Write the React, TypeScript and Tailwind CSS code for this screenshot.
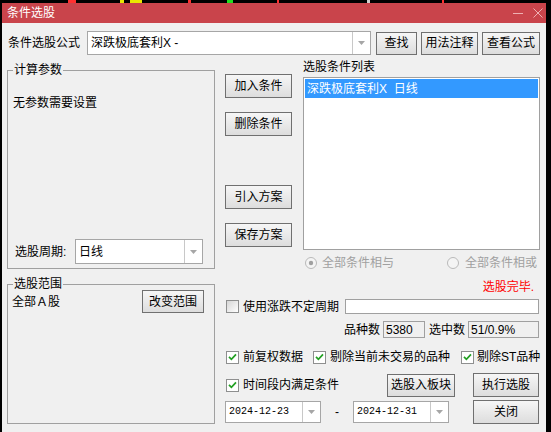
import React from 'react';

type Props = { children?: React.ReactNode; className?: string };

// Classic dialog push button
const Btn = ({ children, className = '' }: Props) => (
  <div
    className={`flex items-center justify-center border border-[#707070] bg-gradient-to-b from-[#f6f6f6] to-[#dddddd] ${className}`}
  >
    {children}
  </div>
);

// Drop-down combo box with the little grey arrow
const Combo = ({ text, className = '', mono = false }: { text: string; className?: string; mono?: boolean }) => (
  <div className={`flex border border-[#a6a6a6] bg-white ${className}`}>
    <div
      className={`flex flex-1 items-center pl-[3px] ${
        mono ? "font-['Liberation_Mono',monospace] text-[10px]" : ''
      }`}
    >
      {text}
    </div>
    <div className="flex w-[18px] items-center justify-center border-l border-[#c8c8c8]">
      <svg width="7" height="4" viewBox="0 0 7 4">
        <path d="M0 0H7L3.5 4Z" fill="#a6a6a6" />
      </svg>
    </div>
  </div>
);

const Check = ({ checked = false }: { checked?: boolean }) => (
  <div
    className={`flex h-[13px] w-[13px] shrink-0 items-center justify-center border border-[#8e8f8f] ${
      checked ? 'bg-white' : 'bg-gradient-to-br from-[#d6d6d6] to-[#ffffff]'
    }`}
  >
    {checked && (
      <svg width="9" height="8" viewBox="0 0 9 8">
        <path d="M1 3.8L3.4 6.3L8 1.3" stroke="#22a022" strokeWidth="1.7" fill="none" />
      </svg>
    )}
  </div>
);

const Radio = ({ on = false }: { on?: boolean }) => (
  <svg width="12" height="12" viewBox="0 0 12 12" className="shrink-0">
    <circle cx="6" cy="6" r="5.5" fill="#f4f4f4" stroke="#b9b9b9" />
    {on && <circle cx="6" cy="6" r="2.2" fill="#a0a0a0" />}
  </svg>
);

// Titled frame; the caption sits on top of the frame line
const Group = ({ title, className = '', children }: Props & { title: string }) => (
  <div className={`relative border border-[#a0a0a0] ${className}`}>
    <span className="absolute -top-[8px] left-[5px] bg-[#f0f0f0] px-[1px]">{title}</span>
    {children}
  </div>
);

export default function App() {
  return (
    <div className="flex h-[432px] w-[551px] flex-col overflow-hidden bg-black font-['Liberation_Sans','Noto_Sans_CJK_SC',sans-serif] text-[12px] leading-[14px] text-black">
      {/* chart pixels peeking above the dialog */}
      <div className="flex h-[3px]">
        <span className="ml-[68px] w-[8px] bg-[#ff3030]" />
        <span className="ml-[44px] w-[4px] bg-[#e8e800]" />
        <span className="ml-[6px] w-[12px] bg-[#e8e800]" />
        <span className="ml-[46px] w-[3px] bg-[#ff3030]" />
        <span className="ml-[36px] w-[6px] bg-[#20e020]" />
        <span className="ml-[44px] w-[2px] bg-[#ff3030]" />
        <span className="ml-[88px] w-[3px] bg-[#d0d0d0]" />
        <span className="ml-[72px] w-[2px] bg-[#ff3030]" />
      </div>

      <div className="flex flex-1">
        <div className="w-[2px]" />
        <div className="flex w-[544px] flex-col">
          {/* title bar */}
          <div className="flex h-[20px] items-center bg-[#c9444b] pl-[5px] text-white">
            <span className="flex-1">条件选股</span>
            <svg width="10" height="10" viewBox="0 0 10 10" className="mr-[10px]">
              <path d="M0 5.5H10" stroke="#eeb0b2" strokeWidth="1" />
            </svg>
            <svg width="10" height="10" viewBox="0 0 10 10" className="mr-[3px]">
              <path d="M0.5 0.5L9.5 9.5M9.5 0.5L0.5 9.5" stroke="#eeb0b2" strokeWidth="1" />
            </svg>
          </div>

          <div className="flex-1 bg-[#f0f0f0]">
            {/* formula selector */}
            <div className="mt-[8px] flex h-[24px] items-center">
              <span className="ml-[6px] w-[79px]">条件选股公式</span>
              <Combo className="h-[24px] w-[284px]" text="深跌极底套利X -" />
              <Btn className="ml-[5px] h-[23px] w-[41px]">查找</Btn>
              <Btn className="ml-[4px] h-[23px] w-[57px]">用法注释</Btn>
              <Btn className="ml-[4px] h-[23px] w-[58px]">查看公式</Btn>
            </div>

            <div className="mt-[5px] flex">
              {/* left column */}
              <div className="ml-[5px] flex w-[208px] flex-col">
                <Group title="计算参数" className="mt-[10px] flex h-[199px] flex-col">
                  <span className="ml-[5px] mt-[25px]">无参数需要设置</span>
                  <div className="mb-[4px] mt-auto flex items-center">
                    <span className="ml-[7px] w-[60px]">选股周期:</span>
                    <Combo className="h-[25px] w-[128px]" text="日线" />
                  </div>
                </Group>
                <Group title="选股范围" className="mt-[15px] flex h-[140px] items-start pt-[5px]">
                  <span className="ml-[4px] mt-[5px]">全部Ａ股</span>
                  <Btn className="ml-auto mr-[10px] h-[23px] w-[62px]">改变范围</Btn>
                </Group>
              </div>

              {/* right side */}
              <div className="ml-[10px] flex w-[316px] flex-col">
                <div className="flex h-[190px]">
                  <div className="flex w-[67px] flex-col">
                    <Btn className="mt-[14px] h-[24px]">加入条件</Btn>
                    <Btn className="mt-[14px] h-[24px]">删除条件</Btn>
                    <Btn className="mt-[49px] h-[24px]">引入方案</Btn>
                    <Btn className="mt-[14px] h-[24px]">保存方案</Btn>
                  </div>
                  <div className="ml-[11px] flex w-[237px] flex-col">
                    <span className="h-[14px]">选股条件列表</span>
                    <div className="mt-[3px] h-[173px] border border-[#a0a0a0] bg-white p-[1px]">
                      <div className="flex h-[19px] items-center bg-[#3399ff] pl-[2px] text-white">
                        深跌极底套利X&nbsp;&nbsp;日线
                      </div>
                    </div>
                  </div>
                </div>

                <div className="mt-[6px] flex h-[14px] items-center text-[#a0a0a0]">
                  <span className="ml-[80px]" />
                  <Radio on />
                  <span className="ml-[5px]">全部条件相与</span>
                  <span className="ml-[53px]" />
                  <Radio />
                  <span className="ml-[6px]">全部条件相或</span>
                </div>

                <div className="mt-[10px] flex h-[14px] justify-end pr-[7px] text-[#ff0000]">选股完毕.</div>

                <div className="mt-[5px] flex h-[15px] items-center">
                  <span className="ml-[1px]" />
                  <Check />
                  <span className="ml-[4px]">使用涨跌不定周期</span>
                  <div className="ml-auto mr-[2px] h-[15px] w-[194px] border border-[#a0a0a0] bg-white" />
                </div>

                <div className="mt-[7px] flex h-[17px] items-center">
                  <span className="ml-[119px]">品种数</span>
                  <div className="ml-[3px] flex h-[17px] w-[42px] items-center border border-[#a0a0a0] pl-[2px]">5380</div>
                  <span className="ml-[4px]">选中数</span>
                  <div className="ml-[3px] flex h-[17px] w-[71px] items-center border border-[#a0a0a0] pl-[2px]">51/0.9%</div>
                </div>

                <div className="mt-[12px] flex h-[14px] items-center">
                  <span className="ml-[1px]" />
                  <Check checked />
                  <span className="ml-[4px]">前复权数据</span>
                  <span className="ml-[10px]" />
                  <Check checked />
                  <span className="ml-[4px]">剔除当前未交易的品种</span>
                  <span className="ml-[11px]" />
                  <Check checked />
                  <span className="ml-[3px]">剔除ST品种</span>
                </div>

                <div className="mt-[9px] flex h-[24px] items-center">
                  <span className="ml-[1px]" />
                  <Check checked />
                  <span className="ml-[4px]">时间段内满足条件</span>
                  <Btn className="ml-[48px] h-[23px] w-[68px]">选股入板块</Btn>
                  <Btn className="ml-[18px] h-[24px] w-[66px]">执行选股</Btn>
                </div>

                <div className="mt-[3px] flex h-[24px] items-center">
                  <Combo className="h-[22px] w-[96px]" text="2024-12-23" mono />
                  <span className="w-[32px] text-center">-</span>
                  <Combo className="h-[22px] w-[96px]" text="2024-12-31" mono />
                  <Btn className="ml-[24px] h-[24px] w-[66px]">关闭</Btn>
                </div>
              </div>
            </div>
          </div>
        </div>
      </div>
    </div>
  );
}
